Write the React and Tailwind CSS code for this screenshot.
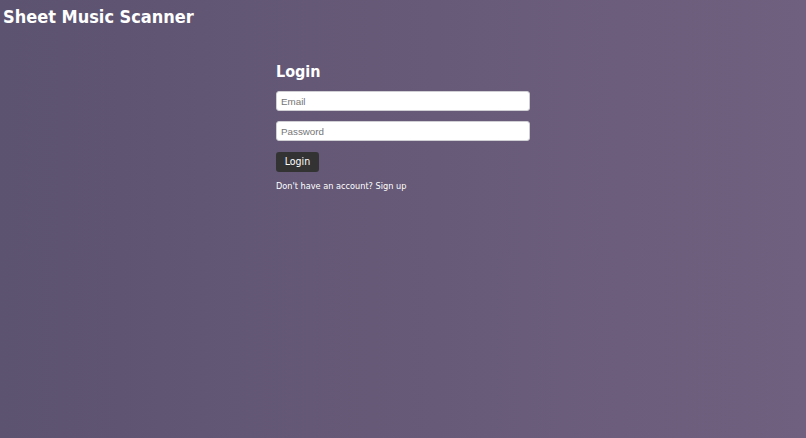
import React, { useState } from 'react';

export default function App() {
  const [email, setEmail] = useState('');
  const [password, setPassword] = useState('');

  return (
    <div className="min-h-[438px] w-full bg-linear-to-r/srgb from-[#5c5370] to-[#70607f] text-white font-['DejaVu_Sans_Condensed','DejaVu_Sans',Verdana,sans-serif]">
      <h1 className="px-[3px] pt-[6px] text-[18px] font-bold leading-[21px]">Sheet Music Scanner</h1>

      <div className="mx-auto mt-[35px] w-[254px]">
        <h2 className="text-[16px] font-bold leading-[20px]">Login</h2>
        <form className="mt-[9px]" onSubmit={(e) => e.preventDefault()}>
          <input
            type="email"
            value={email}
            onChange={(e) => setEmail(e.target.value)}
            placeholder="Email"
            className="block h-[20px] w-full rounded-[3px] border border-[#cfcfd4] bg-white px-[4px] text-[9.8px] text-gray-900 font-['Liberation_Sans',Arial,sans-serif] placeholder:text-[#757575] outline-none"
          />
          <input
            type="password"
            value={password}
            onChange={(e) => setPassword(e.target.value)}
            placeholder="Password"
            className="mt-[10px] block h-[20px] w-full rounded-[3px] border border-[#cfcfd4] bg-white px-[4px] text-[9.8px] text-gray-900 font-['Liberation_Sans',Arial,sans-serif] placeholder:text-[#757575] outline-none"
          />
          <button
            type="submit"
            className="mt-[11px] block h-[20px] w-[43px] rounded-[3px] bg-[#333333] text-[10.5px] text-white"
          >
            Login
          </button>
        </form>
        <p className="mt-[8px] text-[9.1px] leading-[12px]">
          Don't have an account? <a href="#" className="text-white">Sign up</a>
        </p>
      </div>
    </div>
  );
}
